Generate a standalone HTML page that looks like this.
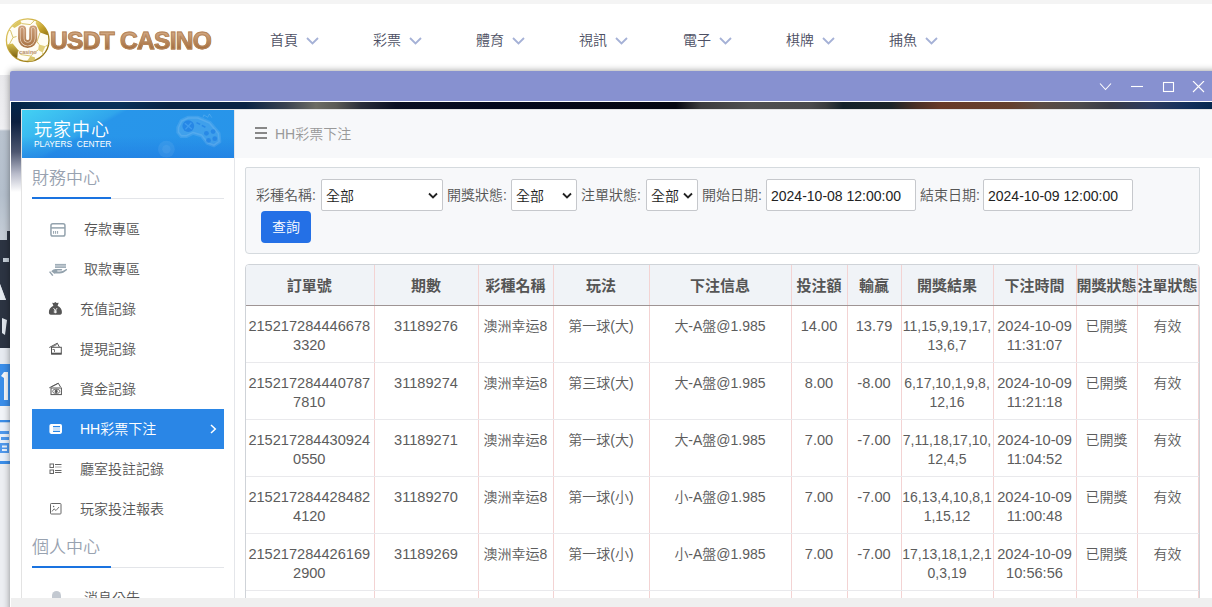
<!DOCTYPE html>
<html lang="zh-Hant">
<head>
<meta charset="utf-8">
<title>USDT CASINO</title>
<style>
*{box-sizing:border-box;margin:0;padding:0}
html,body{width:1212px;height:607px;overflow:hidden;background:#fff}
body{position:relative;font-family:"Liberation Sans","Noto Sans CJK TC",sans-serif;font-size:14px;font-weight:350;color:#555}
.abs{position:absolute}
/* page behind */
#topstrip{left:0;top:0;width:1212px;height:4px;background:#f4f4f4}
#pagehead{left:0;top:4px;width:1212px;height:71px;background:#fff}
#banner{left:0;top:75px;width:12px;height:532px;background:linear-gradient(#e9e9ec 0,#efeff2 50px,#f1f1f4 54px,#b9c3cf 56px,#b4bfcc 120px,#c4ccd6 160px,#d3dae2 280px);overflow:hidden}
.nav{top:30px;height:20px;line-height:20px;font-size:14px;color:#4d4f63;white-space:nowrap}
.nav svg{position:absolute;left:36px;top:7px}
#logotext{left:50px;top:25px;font-size:24.500px;line-height:32px;font-weight:bold;letter-spacing:-.7px;-webkit-text-stroke:.9px #b5855a;color:#b5814f;white-space:nowrap;
 background:linear-gradient(#d3a983 22%,#9f6736 80%);-webkit-background-clip:text;background-clip:text;-webkit-text-fill-color:transparent}
/* modal */
#modal{left:10px;top:71px;width:1240px;height:560px;background:#fff;border-radius:2px 2px 0 0;box-shadow:0 0 7px rgba(0,0,0,.42)}
#mtitle{left:0;top:0;width:1240px;height:30px;background:#8791d0;border-radius:2px 2px 0 0}
#mbody{left:0;top:30px;width:1240px;height:530px;border:1px solid #fff;background:#fff;overflow:hidden}
#darktop{left:0;top:0;width:1240px;height:8px;background:linear-gradient(90deg,#062447 0,#083058 60px,#0a3058 110px,#0a2344 160px,#0a2344 235px,#3a4250 275px,#6c6c64 305px,#5a5a56 325px,#2a2e3a 350px,#0a0f22 385px,#04081c 480px,#05060f 665px,#3c3c3e 690px,#505050 740px,#4a4a4c 800px,#3a3c3e 815px,#14222a 832px,#1c2428 880px,#4a3026 905px,#683a28 930px,#64402e 1000px,#5c4c44 1030px,#4c4a4c 1070px,#383a46 1100px,#2c3a5e 1140px,#14305c 1175px,#06284f 1201px)}
#darkleft{left:0;top:0;width:10px;height:100px;background:linear-gradient(#03254a 0,#0c1f3f 20px,#4d5670 50px,#b9bccb 72px,#fff 90px)}
#panel{left:10px;top:7px;width:1230px;height:520px;background:#fff;border:1px solid #e3e3e3}
/* sidebar */
#side{left:0;top:0;width:213px;height:520px;background:#fff;border-right:1px solid #e4e6ea}
#sidehead{left:0;top:0;width:212px;height:48px;background:linear-gradient(rgba(30,120,226,0) 55%,rgba(30,118,224,.55) 100%),linear-gradient(150deg,#43d1f3 0,#3abaf0 18%,#30a5ec 33%,#2896ea 36%,#2894e9 100%);color:#fff;overflow:hidden}
#sidehead .t1{left:12px;top:7px;font-size:18px;letter-spacing:1px;line-height:26px;white-space:nowrap}
#sidehead .t2{left:12px;top:29px;font-size:8.400px;line-height:10px;white-space:nowrap;word-spacing:2.500px}
.sec{left:10px;width:192px;height:36px;font-size:17px;font-weight:350;color:#98a2b0;line-height:31px;white-space:nowrap}
.sec i{position:absolute;left:0;bottom:0;width:192px;height:1px;background:#e3e5e9}
.sec b{position:absolute;left:0;bottom:0;width:79px;height:2px;background:#1a73e0}
.item{left:10px;width:192px;height:40px;line-height:40px;font-size:14px;color:#555;white-space:nowrap}
.item span{position:absolute;left:48px;top:0}
.item.a span{left:52px}
.item svg{position:absolute}
.item.on{background:#2a86e6;color:#fff}
/* main */
#main{left:213px;top:0;width:1017px;height:520px;background:#fff}
#crumb{left:0;top:0;width:1017px;height:48px;background:#f7f8fa;color:#999;font-size:14px;line-height:48px}
#crumb span{position:absolute;left:40px;top:0;white-space:nowrap}
#crumb i{position:absolute;left:20px;width:12px;height:2px;background:#888}
#filter{left:10px;top:57px;width:955px;height:87px;background:#f7f8fa;border:1px solid #d5dade;border-radius:2px 1px 4px 4px}
.lab{top:11px;height:32px;line-height:33px;font-size:14px;color:#555;white-space:nowrap}
.sel,.inp{top:11px;height:32px;background:#fff;border:1px solid #c6c8cc;border-radius:2px;line-height:32px;font-size:14px;color:#222;white-space:nowrap;padding-left:4px}
.sel svg{position:absolute;right:4px;top:12px}
#btn{left:15px;top:43px;width:50px;height:32px;background:#2470e6;border-radius:4px;color:#fff;font-size:14px;line-height:33px;text-align:center}
#tbl{left:10px;top:154px;width:955px;height:380px;border:1px solid #cfd3d8;border-radius:4px 4px 0 0;overflow:hidden;background:#fff}
table{border-collapse:collapse;table-layout:fixed;width:953px;position:absolute;left:-1px;top:0}
th{height:40px;background:#f0f3f7;font-size:15px;font-weight:bold;color:#555;text-align:center;white-space:nowrap;border-bottom:1px solid #9e9494;border-right:1px solid #f3d3d3;padding:0;overflow:hidden}
td{height:57px;vertical-align:top;padding:11px 0 0 0;line-height:19px;font-size:14.6px;color:#5c5c5c;text-align:center;border-bottom:1px solid #e9e9ec;border-right:1px solid #f3d3d3;white-space:nowrap;overflow:hidden}
td.r{font-size:14px}
td.c{font-size:14px}
#botbar{left:11px;top:598px;width:1201px;height:9px;background:#efefef}
</style>
</head>
<body>
<div class="abs" id="topstrip"></div>
<div class="abs" id="pagehead"></div>
<div class="abs" id="banner">
 <svg class="abs" style="left:0;top:0" width="12" height="532" viewBox="0 0 12 532">
  <path d="M7 156h5v53H0v-44h7z" fill="#2c3442"/>
  <path d="M3 183h6v4H3z" fill="#c5ced8"/>
  <path d="M0 209h12v16H6z" fill="#2c3442"/>
  <path d="M0 209l6 16H0z" fill="#e4e9ef"/>
  <path d="M0 225h12v48H0z" fill="#2c3442"/>
  <path d="M2 243l5 2-2 15-3-2z" fill="#dfe5ec"/>
  <path d="M0 273h12v16H0z" fill="#e6eaf0"/>
  <path d="M0 289h12v42H0z" fill="#3b8ee9"/>
  <path d="M1 301l3-4h4v28H4v-22z" fill="#f4f6fa"/>
  <path d="M0 331h12v14H0z" fill="#f1f4f8"/>
  <path d="M0 345h12v2.500H0z" fill="#3b8ee9"/>
  <path d="M0 347.500h12v38.500H0z" fill="#e9f0fa"/>
  <path d="M0 356h9v3H0zM1 362h8v3H1zM0 368h9v10H0z" fill="#4f98ec"/>
  <path d="M2 370.500h5v2H2zM2 374h5v2H2z" fill="#e9f0fa"/>
  <path d="M0 386h12v3H0z" fill="#3b8ee9"/>
  <rect x="0" y="389" width="12" height="143" fill="#eceef2"/>
 </svg>
</div>

<!-- logo -->
<svg class="abs" style="left:5px;top:17px" width="46" height="46" viewBox="0 0 46 46">
 <defs>
  <linearGradient id="gold" x1="0" y1="0" x2="1" y2="1"><stop offset="0" stop-color="#e9d77f"/><stop offset=".45" stop-color="#c5a22c"/><stop offset="1" stop-color="#7f620c"/></linearGradient>
  <linearGradient id="gold2" x1="0" y1="0" x2="0" y2="1"><stop offset="0" stop-color="#d8c050"/><stop offset="1" stop-color="#7a5e0c"/></linearGradient>
  <linearGradient id="ubr" gradientUnits="userSpaceOnUse" x1="0" y1="8" x2="0" y2="32"><stop offset="0" stop-color="#cfa27e"/><stop offset="1" stop-color="#a56f3e"/></linearGradient>
  <clipPath id="ballclip"><circle cx="22.700" cy="23.200" r="21.300"/></clipPath>
 </defs>
 <circle cx="22.700" cy="23.200" r="21.300" fill="#fffdf4" stroke="url(#gold)" stroke-width="1.300"/>
 <g clip-path="url(#ballclip)">
  <path d="M31 2l10.500 1 8 13.500-7.400 1.500-7-2.400-4.300-9z" fill="url(#gold)"/>
  <path d="M2.300 27.500l5.400-.9 5.400 6.300-.9 8.200-5.400-2.700-5.500-4z" fill="url(#gold2)"/>
  <path d="M6.800 9.300L15 3l1.800 3.600-7.300 4.500z" fill="#dcc661"/>
  <path d="M34 27.500l6.400 1.800-2.800 6.300-4.500-2.700z" fill="#e1cf7c"/>
  <path d="M22 44l3.600-5 4.500 1.500-1 6z" fill="#d9c56a"/>
  <path d="M0 12l5.500 1.500 2.500 7-3.500 6.500M8 20.500l3.500-1M16.800 6.600l8.500 1 5.700-5.600M35 15.600l-3 9 2 2.900M40.400 29.300l6-3M33.100 32.900l-7.500 6.100-10-1.500-2.500-4.600M12.200 41.100l4 4.500M37.600 35.600l1 5" fill="none" stroke="#d4bd5c" stroke-width=".9"/>
 </g>
 <path d="M17.100 12.400V21.550A5.550 5.550 0 0 0 28.200 21.550V12.400" fill="none" stroke="url(#ubr)" stroke-width="8" stroke-linecap="round"/>
 <path d="M17.100 12.400V21.550A5.550 5.550 0 0 0 28.200 21.550V12.400" fill="none" stroke="#f3e4d3" stroke-width="4.400" stroke-linecap="round"/>
 <path d="M17.100 12.400V21.550A5.550 5.550 0 0 0 28.200 21.550V12.400" fill="none" stroke="url(#ubr)" stroke-width="3.200" stroke-linecap="round"/>
 <text x="22.900" y="37.300" font-family="Liberation Sans, sans-serif" font-size="5.600" font-weight="bold" text-anchor="middle" fill="#b89270" stroke="#f6ebe0" stroke-width=".5" paint-order="stroke">casino</text>
</svg>
<div class="abs" id="logotext">USDT CASINO</div>

<!-- nav -->
<div class="abs nav" style="left:270px">首頁<svg width="13" height="8" viewBox="0 0 13 8"><path d="M1 1l5.5 5.5L12 1" fill="none" stroke="#a5b1d6" stroke-width="1.8"/></svg></div>
<div class="abs nav" style="left:373px">彩票<svg width="13" height="8" viewBox="0 0 13 8"><path d="M1 1l5.5 5.5L12 1" fill="none" stroke="#a5b1d6" stroke-width="1.8"/></svg></div>
<div class="abs nav" style="left:476px">體育<svg width="13" height="8" viewBox="0 0 13 8"><path d="M1 1l5.5 5.5L12 1" fill="none" stroke="#a5b1d6" stroke-width="1.8"/></svg></div>
<div class="abs nav" style="left:579px">視訊<svg width="13" height="8" viewBox="0 0 13 8"><path d="M1 1l5.5 5.5L12 1" fill="none" stroke="#a5b1d6" stroke-width="1.8"/></svg></div>
<div class="abs nav" style="left:683px">電子<svg width="13" height="8" viewBox="0 0 13 8"><path d="M1 1l5.5 5.5L12 1" fill="none" stroke="#a5b1d6" stroke-width="1.8"/></svg></div>
<div class="abs nav" style="left:786px">棋牌<svg width="13" height="8" viewBox="0 0 13 8"><path d="M1 1l5.5 5.5L12 1" fill="none" stroke="#a5b1d6" stroke-width="1.8"/></svg></div>
<div class="abs nav" style="left:889px">捕魚<svg width="13" height="8" viewBox="0 0 13 8"><path d="M1 1l5.5 5.5L12 1" fill="none" stroke="#a5b1d6" stroke-width="1.8"/></svg></div>

<!-- modal -->
<div class="abs" id="modal">
 <div class="abs" id="mtitle">
  <svg class="abs" style="left:1088px;top:10px" width="120" height="14" viewBox="0 0 120 14" fill="none" stroke="#fff" stroke-width="1.1">
   <path d="M2 2.5l5.5 6L13 2.5"/><path d="M33 5.5h12"/><rect x="65.500" y="1.500" width="10" height="9"/><path d="M95 0l11 11M106 0L95 11"/>
  </svg>
 </div>
 <div class="abs" id="mbody">
  <div class="abs" id="darktop"></div>
  <div class="abs" id="darkleft"></div>
  <div class="abs" id="panel">
   <div class="abs" id="side">
    <div class="abs" id="sidehead"><svg class="abs" style="left:0;top:0" width="212" height="48" viewBox="0 0 212 48">
 <path d="M155.800 17.400L159.100 10.600L165.900 7.300L176 7.300L187.800 12.300L197 23.300L197.900 31.700L192 35.900L185.200 33.400L179.300 25.800L170.900 23.300L164.200 26.600L159.100 26.600L155.800 22.400Z" fill="#fff" fill-opacity=".11" stroke="#fff" stroke-opacity=".11" stroke-width="3" stroke-linejoin="round"/>
 <circle cx="166.300" cy="16.100" r="5.900" fill="#1f7fe4" fill-opacity=".75"/>
 <path d="M162.800 13.200l7 5.800M169.400 12.800l-6 6.600" stroke="#3f9cef" stroke-width="1.400" fill="none"/>
 <g fill="#1f7fe4" fill-opacity=".7"><circle cx="184.400" cy="23.300" r="2.400"/><circle cx="191.100" cy="21.600" r="2.400"/><circle cx="186.500" cy="30.400" r="2.400"/><circle cx="192.800" cy="28.700" r="2.400"/></g>
 <path d="M174.500 12.600l3.600 1.800M179.800 15.400l3.600 1.800" stroke="#1f7fe4" stroke-opacity=".7" stroke-width="1.600" fill="none"/>
 <path d="M181 7.500l.8-2.600 4 2.400 1.600-3.400 2.400 3.800" stroke="#fff" stroke-opacity=".14" stroke-width="1" fill="none"/>
 <circle cx="144.400" cy="39.200" r="8.400" fill="#fff" fill-opacity=".07"/>
 <circle cx="144.400" cy="39.200" r="4.200" fill="#fff" fill-opacity=".06"/>
</svg><div class="abs t1">玩家中心</div><div class="abs t2">PLAYERS CENTER</div></div>
    <div class="abs sec" style="top:53px">財務中心<i></i><b></b></div>
    <div class="abs item a" style="top:99px"><svg style="left:18px;top:14px" width="16" height="14" viewBox="0 0 16 14" fill="none" stroke="#93a2ad" stroke-width="1.5"><rect x=".95" y=".85" width="14" height="12.2" rx="1.8"/><path d="M1 4.900h14"/><path d="M3.600 8v2.800M5.600 8v2.800M7.600 8v2.800" stroke-width="1"/></svg><span>存款專區</span></div>
    <div class="abs item a" style="top:139px"><svg style="left:17px;top:14px" width="19" height="14" viewBox="0 0 19 14"><rect x="6" y="1.100" width="11" height="3.600" fill="#bcc5cd"/><path d="M6 1.400h11M6 4.400h11" stroke="#93a2ad" stroke-width=".8" fill="none"/><path d="M2.200 8.300C4 6.600 5 6.200 6.500 6.100h6c.9 0 .9 1.500 0 1.500H8.600c-.5 0-.5.700 0 .8 2 .4 4 .2 5.500-.6l3-1.700c.7-.4 1.400.5.700 1.100-2.300 2-4.600 3.300-7.300 3.300-2 0-3.600-.4-5.200.3z" fill="#93a2ad"/><path d="M.6 8.600l3.200 4" stroke="#93a2ad" stroke-width="1.500" fill="none"/></svg><span>取款專區</span></div>
    <div class="abs item" style="top:179px"><svg style="left:16px;top:12px" width="15" height="15" viewBox="0 0 15 15"><path d="M4.200 1.700L6 2.100L7.300 1L8.700 2.100L10.700 1.700L9.600 4.700C12.500 6.100 14 8.600 13.900 11.100C13.900 12.900 13.400 13.700 12 13.700H2.900C1.400 13.700.9 12.900.9 11.100C.8 8.600 2.400 6.100 5.400 4.700Z" fill="#555"/><path d="M5.500 7.100l1.800 2.300 1.800-2.300M7.300 9.400v2.900M5.800 10h3M5.800 11.200h3" stroke="#fff" stroke-width=".9" fill="none"/></svg><span>充值記錄</span></div>
    <div class="abs item" style="top:219px"><svg style="left:16px;top:12px" width="15" height="15" viewBox="0 0 15 15" fill="none" stroke="#555" stroke-width="1"><path d="M1.300 6.500l8-4.300 2.100 3.900"/><path d="M2.900 6.600l5.900-3.100" stroke-width=".8"/><rect x="3.500" y="6.300" width="9.800" height="6.800"/><path d="M3.500 12.500h9.800" stroke-width="1.600"/><path d="M4.500 8.500h2v2.500" stroke="#777"/></svg><span>提現記錄</span></div>
    <div class="abs item" style="top:259px"><svg style="left:16px;top:12px" width="15" height="15" viewBox="0 0 15 15" fill="none" stroke="#555" stroke-width="1"><path d="M1.300 6.800l9-4.600 2.200 3.800"/><path d="M3.300 5.900l6.300-3.200" stroke-width=".8"/><rect x="3" y="7" width="10.400" height="6.600"/><ellipse cx="8.200" cy="10.300" rx="3.600" ry="2.200" stroke-width=".8"/><ellipse cx="8.200" cy="10.300" rx="1" ry="1.500" fill="#555"/></svg><span>資金記錄</span></div>
    <div class="abs item on" style="top:299px"><svg style="left:17px;top:14px" width="14" height="12" viewBox="0 0 14 12"><rect x=".4" y=".9" width="12.600" height="10" rx="1.800" fill="#fff"/><path d="M4 3.600h7M4 8.400h7" stroke="#2a86e6" stroke-width="1.100"/><path d="M4 6h7" stroke="#7fb6f0" stroke-width=".8"/></svg><svg style="left:178px;top:15px" width="7" height="10" viewBox="0 0 7 10" fill="none" stroke="#fff" stroke-width="1.500"><path d="M1 1l4.300 4L1 9"/></svg><span>HH彩票下注</span></div>
    <div class="abs item" style="top:339px"><svg style="left:17px;top:14px" width="14" height="12" viewBox="0 0 14 12" fill="none" stroke="#666" stroke-width="1"><rect x="1" y="1" width="3.500" height="3.500"/><rect x="1" y="7" width="3.500" height="3.500"/><path d="M6 1.500h6.500M6 7.500h6.500M6 9.500h6.500"/><path d="M6 4h6.500" stroke="#aaa"/></svg><span>廳室投註記錄</span></div>
    <div class="abs item" style="top:379px"><svg style="left:18px;top:14px" width="12" height="12" viewBox="0 0 12 12" fill="none" stroke="#666" stroke-width="1"><rect x=".5" y=".5" width="10.500" height="10.500" rx=".8"/><path d="M2 8.500l2-2.700 2 1.700 3-3.500" stroke-width=".9"/><circle cx="3.600" cy="3.500" r=".7" fill="#666" stroke="none"/></svg><span>玩家投注報表</span></div>
    <div class="abs sec" style="top:422px">個人中心<i></i><b></b></div>
    <div class="abs item a" style="top:468px"><svg style="left:20px;top:13px" width="10" height="14" viewBox="0 0 10 14"><path d="M0 14V4.500a4.500 4.500 0 0 1 9 0V14z" fill="#c3c9d1"/></svg><span>消息公告</span></div>
   </div>
   <div class="abs" id="main">
    <div class="abs" id="crumb"><i style="top:17px"></i><i style="top:22px"></i><i style="top:27px"></i><span>HH彩票下注</span></div>
    <div class="abs" id="filter">
     <div class="abs lab" style="left:10px">彩種名稱:</div>
     <div class="abs sel" style="left:75px;width:122px">全部<svg width="10" height="8" viewBox="0 0 10 8"><path d="M1 1.500l4 4 4-4" fill="none" stroke="#222" stroke-width="1.8"/></svg></div>
     <div class="abs lab" style="left:201px">開獎狀態:</div>
     <div class="abs sel" style="left:265px;width:66px">全部<svg width="10" height="8" viewBox="0 0 10 8"><path d="M1 1.500l4 4 4-4" fill="none" stroke="#222" stroke-width="1.8"/></svg></div>
     <div class="abs lab" style="left:335px">注單狀態:</div>
     <div class="abs sel" style="left:400px;width:52px">全部<svg width="10" height="8" viewBox="0 0 10 8"><path d="M1 1.500l4 4 4-4" fill="none" stroke="#222" stroke-width="1.8"/></svg></div>
     <div class="abs lab" style="left:456px">開始日期:</div>
     <div class="abs inp" style="left:520px;width:150px">2024-10-08 12:00:00</div>
     <div class="abs lab" style="left:674px">結束日期:</div>
     <div class="abs inp" style="left:737px;width:150px">2024-10-09 12:00:00</div>
     <div class="abs" id="btn">查詢</div>
    </div>
    <div class="abs" id="tbl">
     <table>
      <colgroup><col style="width:129px"><col style="width:104px"><col style="width:75px"><col style="width:96px"><col style="width:142px"><col style="width:56px"><col style="width:54px"><col style="width:92px"><col style="width:83px"><col style="width:61px"><col style="width:61px"></colgroup>
      <tr><th>訂單號</th><th>期數</th><th>彩種名稱</th><th>玩法</th><th>下注信息</th><th>投注額</th><th>輸贏</th><th>開獎結果</th><th>下注時間</th><th>開獎狀態</th><th>注單狀態</th></tr>
      <tr><td>215217284446678<br>3320</td><td>31189276</td><td class="c">澳洲幸运8</td><td class="c">第一球(大)</td><td class="c">大-A盤@1.985</td><td>14.00</td><td>13.79</td><td class="r">11,15,9,19,17,<br>13,6,7</td><td>2024-10-09<br>11:31:07</td><td class="c">已開獎</td><td class="c">有效</td></tr>
      <tr><td>215217284440787<br>7810</td><td>31189274</td><td class="c">澳洲幸运8</td><td class="c">第三球(大)</td><td class="c">大-A盤@1.985</td><td>8.00</td><td>-8.00</td><td class="r">6,17,10,1,9,8,<br>12,16</td><td>2024-10-09<br>11:21:18</td><td class="c">已開獎</td><td class="c">有效</td></tr>
      <tr><td>215217284430924<br>0550</td><td>31189271</td><td class="c">澳洲幸运8</td><td class="c">第一球(大)</td><td class="c">大-A盤@1.985</td><td>7.00</td><td>-7.00</td><td class="r">7,11,18,17,10,<br>12,4,5</td><td>2024-10-09<br>11:04:52</td><td class="c">已開獎</td><td class="c">有效</td></tr>
      <tr><td>215217284428482<br>4120</td><td>31189270</td><td class="c">澳洲幸运8</td><td class="c">第一球(小)</td><td class="c">小-A盤@1.985</td><td>7.00</td><td>-7.00</td><td class="r">16,13,4,10,8,1<br>1,15,12</td><td>2024-10-09<br>11:00:48</td><td class="c">已開獎</td><td class="c">有效</td></tr>
      <tr><td>215217284426169<br>2900</td><td>31189269</td><td class="c">澳洲幸运8</td><td class="c">第一球(小)</td><td class="c">小-A盤@1.985</td><td>7.00</td><td>-7.00</td><td class="r">17,13,18,1,2,1<br>0,3,19</td><td>2024-10-09<br>10:56:56</td><td class="c">已開獎</td><td class="c">有效</td></tr>
      <tr><td></td><td></td><td></td><td></td><td></td><td></td><td></td><td></td><td></td><td></td><td></td></tr>
     </table>
    </div>
   </div>
  </div>
 </div>
</div>
<div class="abs" id="botbar"></div>
</body>
</html>
